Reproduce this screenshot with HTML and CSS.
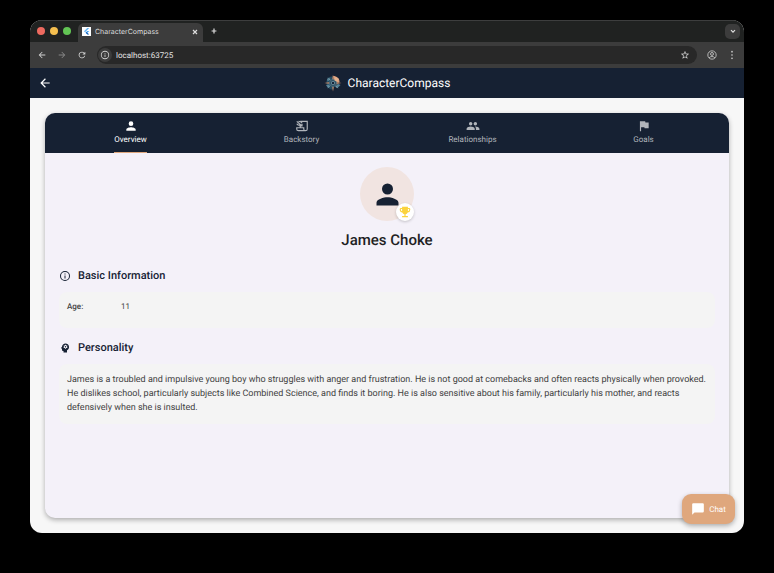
FILE: index.html
```html
<!DOCTYPE html>
<html lang="en">
<head>
<meta charset="utf-8">
<title>CharacterCompass</title>
<link rel="stylesheet" href="styles.css">
</head>
<body>
<div class="window">
  <div class="tabstrip">
    <div class="lights"><span class="light red"></span><span class="light yellow"></span><span class="light green"></span></div>
    <div class="browser-tab">
      <svg class="favicon" viewBox="0 0 18 18"><path fill="#fff" d="M0 0h18v18H0z"/><path fill="#64b5f6" d="M10.500 2h4L6 10.500l-2-2z"/><path fill="#42a5f5" d="M10.500 8h4L11 11.500l-2-2z"/><path fill="#1565c0" d="M9 9.500l5.500 5.500h-4L7 11.500z"/></svg>
      <span class="tab-title">CharacterCompass</span>
      <button class="plain" aria-label="Close tab"><svg class="i8" viewBox="0 0 10 10"><path class="line" d="M2.500 2.500l5 5M7.500 2.500l-5 5"/></svg></button>
    </div>
    <button class="plain new-tab" aria-label="New tab"><svg class="i8" viewBox="0 0 10 10"><path class="line" d="M5 2v6M2 5h6"/></svg></button>
    <button class="plain tab-search" aria-label="Search tabs"><svg class="i8" viewBox="0 0 10 10"><path class="line" d="M2.500 4L5 6.500 7.500 4"/></svg></button>
  </div>
  <div class="toolbar">
    <button class="plain" aria-label="Back"><svg class="i10" viewBox="0 0 24 24"><path fill="currentColor" d="M20 11H7.830l5.590-5.590L12 4l-8 8 8 8 1.410-1.410L7.830 13H20z"/></svg></button>
    <button class="plain dim" aria-label="Forward"><svg class="i10" viewBox="0 0 24 24"><path fill="currentColor" d="M4 13h12.170l-5.590 5.590L12 20l8-8-8-8-1.410 1.410L16.170 11H4z"/></svg></button>
    <button class="plain" aria-label="Reload"><svg class="i10" viewBox="0 0 24 24"><path fill="currentColor" d="M17.650 6.350A8 8 0 1 0 19.730 14h-2.080A6 6 0 1 1 12 6c1.660 0 3.140.69 4.220 1.780L13 11h7V4z"/></svg></button>
    <div class="address">
      <span class="site-info"><svg class="i10" viewBox="0 0 24 24"><path fill="currentColor" d="M11 7h2v2h-2zm0 4h2v6h-2zm1-9a10 10 0 1 0 0 20 10 10 0 0 0 0-20zm0 18a8 8 0 1 1 0-16 8 8 0 0 1 0 16z"/></svg></span>
      <input class="url" type="text" value="localhost:63725" aria-label="Address">
      <button class="plain" aria-label="Bookmark"><svg class="i10" viewBox="0 0 24 24"><path fill="currentColor" d="M22 9.240l-7.190-.62L12 2 9.190 8.630 2 9.240l5.460 4.730L5.820 21 12 17.270 18.180 21l-1.630-7.030zM12 15.400l-3.760 2.270 1-4.280-3.320-2.880 4.380-.38L12 6.100l1.710 4.040 4.380.38-3.320 2.880 1 4.280z"/></svg></button>
    </div>
    <button class="plain" aria-label="Profile"><svg class="i10" viewBox="0 0 24 24"><g fill="none" stroke="currentColor" stroke-width="2"><circle cx="12" cy="12" r="10"/><circle cx="12" cy="9.500" r="3.500"/><path d="M5 19c3.500-4.500 10.500-4.500 14 0"/></g></svg></button>
    <button class="plain" aria-label="Menu"><svg class="i10" viewBox="0 0 24 24"><g fill="currentColor"><circle cx="12" cy="4" r="2"/><circle cx="12" cy="12" r="2"/><circle cx="12" cy="20" r="2"/></g></svg></button>
  </div>
  <header class="appbar">
    <button class="plain back" aria-label="Go back"><svg class="i14" viewBox="0 0 24 24"><path fill="currentColor" d="M20 11H7.830l5.590-5.590L12 4l-8 8 8 8 1.410-1.410L7.830 13H20z"/></svg></button>
    <div class="brand">
      <svg class="logo" viewBox="0 0 36 36">
        <path fill="#254b60" d="M17 5C9 4 4 11 5 19s7 13 13 12V5z"/>
        <path fill="#dda17e" d="M18 4c8 0 13 5 13 12l-5 5-8-3z"/>
        <path fill="#568398" d="M6 9l7 2-6 4zM4 22l8-1-4 7zM28 20l5 2-6 6-5-3z"/>
        <path fill="#a07863" d="M18 1l2 9-2 3-2-3zM35 18l-8 2-4-2 4-2zM18 35l-2-8 2-4 2 4zM1 18l8-2 4 2-4 2z"/>
        <path fill="#7ba0ae" d="M7 7l6 3-2 2zM29 29l-6-3 2-2zM7 29l3-6 2 2z"/>
        <circle cx="18" cy="18" r="7" fill="#2b4a5e" stroke="#55798b" stroke-width="1.500"/>
        <circle cx="18" cy="18" r="3.500" fill="#17263a" stroke="#7ba0ae" stroke-width="1.500"/>
        <path fill="#e5b28f" d="M22 6l8 4-4 5-5-2z"/>
      </svg>
      <h1>CharacterCompass</h1>
    </div>
  </header>
  <main class="page">
    <section class="card">
      <nav class="tabs">
        <a href="#overview" class="tab active"><svg class="i14" viewBox="0 0 24 24"><path fill="currentColor" d="M12 12a4 4 0 1 0 0-8 4 4 0 0 0 0 8zm0 2c-2.670 0-8 1.340-8 4v2h16v-2c0-2.660-5.330-4-8-4z"/></svg><span>Overview</span></a>
        <a href="#backstory" class="tab"><svg class="i14" viewBox="0 0 24 24"><path fill="none" stroke="currentColor" stroke-width="2" d="M9 4h12v13a3 3 0 0 1-3 3H6a3 3 0 0 1-3-3v-2h12v2a3 3 0 0 0 3 3M9 15v-3"/><path fill="none" stroke="currentColor" stroke-width="2" d="M3 4l9 8M12 8v4H8M3 8c1 2 3 3 6 3M6 4c3 0 5 1 6 3"/></svg><span>Backstory</span></a>
        <a href="#relationships" class="tab"><svg class="i14" viewBox="0 0 24 24"><path fill="currentColor" d="M16 11a3 3 0 1 0 0-6 3 3 0 0 0 0 6zm-8 0a3 3 0 1 0 0-6 3 3 0 0 0 0 6zm0 2c-2.330 0-7 1.170-7 3.500V19h14v-2.500C15 14.170 10.330 13 8 13zm8 0c-.29 0-.62.02-.97.05 1.160.84 1.970 1.970 1.970 3.450V19h6v-2.500c0-2.330-4.670-3.500-7-3.500z"/></svg><span>Relationships</span></a>
        <a href="#goals" class="tab"><svg class="i14" viewBox="0 0 24 24"><path fill="currentColor" d="M14.400 6L14 4H5v17h2v-7h5.600l.4 2h7V6z"/></svg><span>Goals</span></a>
      </nav>
      <div class="content" id="overview">
        <div class="avatar">
          <svg class="person" viewBox="0 0 24 24"><path fill="currentColor" d="M12 12a4 4 0 1 0 0-8 4 4 0 0 0 0 8zm0 2c-2.670 0-8 1.340-8 4v2h16v-2c0-2.660-5.330-4-8-4z"/></svg>
          <span class="badge"><svg class="i14" viewBox="0 0 24 24"><path fill="currentColor" d="M19 5h-2V3H7v2H5a2 2 0 0 0-2 2v1c0 2.550 1.920 4.630 4.390 4.940A5 5 0 0 0 11 15.900V19H7v2h10v-2h-4v-3.100a5 5 0 0 0 3.610-2.960A5 5 0 0 0 21 8V7a2 2 0 0 0-2-2zM5 8V7h2v3.820A3 3 0 0 1 5 8zm14 0a3 3 0 0 1-2 2.820V7h2z"/></svg></span>
        </div>
        <h2 class="name">James Choke</h2>
        <h3 class="heading"><svg class="i12" viewBox="0 0 24 24"><path fill="currentColor" d="M11 7h2v2h-2zm0 4h2v6h-2zm1-9a10 10 0 1 0 0 20 10 10 0 0 0 0-20zm0 18a8 8 0 1 1 0-16 8 8 0 0 1 0 16z"/></svg>Basic Information</h3>
        <dl class="panel facts"><dt>Age:</dt><dd>11</dd></dl>
        <h3 class="heading"><svg class="i12" viewBox="0 0 24 24"><path fill="currentColor" fill-rule="evenodd" d="M13 3C9.250 3 6.200 5.940 6.020 9.640L4.100 12.200c-.25.33-.01.8.4.8H6v3a2 2 0 0 0 2 2h1v3h7v-4.680A7 7 0 0 0 13 3zm-.8 2.500h1.600l.3 1.200.9.500 1.200-.4.800 1.400-.9.800v1l.9.800-.8 1.400-1.200-.4-.9.500-.3 1.200h-1.600l-.3-1.200-.9-.5-1.200.4-.8-1.400.9-.8V9l-.9-.8.8-1.400 1.200.4.900-.5zM13 8a1.500 1.500 0 1 0 0 3 1.500 1.500 0 0 0 0-3z"/></svg>Personality</h3>
        <p class="panel bio">James is a troubled and impulsive young boy who struggles with anger and frustration. He is not good at comebacks and often reacts physically when provoked.<br>He dislikes school, particularly subjects like Combined Science, and finds it boring. He is also sensitive about his family, particularly his mother, and reacts<br>defensively when she is insulted.</p>
      </div>
    </section>
    <button class="chat"><svg class="i14" viewBox="0 0 24 24"><path fill="currentColor" d="M20 2H4a2 2 0 0 0-2 2v18l4-4h14a2 2 0 0 0 2-2V4a2 2 0 0 0-2-2z"/></svg>Chat</button>
  </main>
</div>
</body>
</html>
```
FILE: styles.css
```css
* { box-sizing: border-box; }
body {
  margin: 0;
  min-height: 100vh;
  padding: 20px 30px 40px;
  display: flex;
  background: #000;
  font-family: Roboto, "Liberation Sans", sans-serif;
  text-rendering: geometricPrecision;
}
h1, h2, h3, p, dl, dd { margin: 0; }
button, input { text-rendering: inherit; }
svg { display: block; flex: none; }
.i8 { width: 8px; height: 8px; }
.i10 { width: 10px; height: 10px; }
.i12 { width: 12px; height: 12px; }
.i14 { width: 14px; height: 14px; }
.line { fill: none; stroke: currentColor; stroke-width: 1.500; }
.plain {
  display: flex;
  align-items: center;
  justify-content: center;
  padding: 0;
  border: 0;
  background: none;
  color: inherit;
}
.window {
  flex: 1;
  display: flex;
  flex-direction: column;
  border-radius: 12px;
  overflow: hidden;
  background: #f7f7f7;
}
.tabstrip {
  height: 22px;
  display: flex;
  align-items: center;
  padding: 0 4px 0 7px;
  background: #202221;
  box-shadow: inset 0 1px #3d3e3e;
  color: #dedede;
}
.lights { display: flex; gap: 5px; }
.light { width: 8px; height: 8px; border-radius: 50%; }
.red { background: #ed6a5f; }
.yellow { background: #f5bf4f; }
.green { background: #62c554; }
.browser-tab {
  width: 125px;
  height: 19px;
  align-self: flex-end;
  display: flex;
  align-items: center;
  gap: 4px;
  margin-left: 7px;
  padding: 0 4px 2px;
  border-radius: 6px 6px 0 0;
  background: #3c3c3c;
}
.favicon { width: 9px; height: 9px; }
.tab-title { flex: 1; font: 7px Inter, sans-serif; }
.new-tab { margin-left: 7px; }
.tab-search {
  width: 15px;
  height: 15px;
  margin-left: auto;
  border-radius: 5px;
  background: #3c3c3c;
}
.toolbar {
  height: 26px;
  display: flex;
  align-items: center;
  gap: 10px;
  padding: 0 7px;
  background: #3c3c3c;
  color: #d0d0d0;
}
.dim { color: #858585; }
.address {
  flex: 1;
  height: 18px;
  display: flex;
  align-items: center;
  gap: 4px;
  padding: 0 7px 0 1px;
  border-radius: 9px;
  background: #282828;
}
.site-info {
  width: 14px;
  height: 14px;
  display: grid;
  place-items: center;
  border-radius: 50%;
  background: #3c3c3c;
}
.url {
  flex: 1;
  min-width: 0;
  padding: 0;
  border: 0;
  background: none;
  color: #e3e3e3;
  font: 8px Roboto, sans-serif;
}
.appbar {
  height: 30px;
  display: grid;
  grid-template-columns: 1fr auto 1fr;
  align-items: center;
  padding: 0 8px;
  background: #162133;
  color: #fff;
}
.back { justify-self: start; }
.brand { display: flex; align-items: center; gap: 6px; }
.logo { width: 18px; height: 18px; }
.brand h1 { font-size: 12px; font-weight: 400; }
.page {
  position: relative;
  flex: 1;
  display: flex;
  padding: 15px;
}
.card {
  flex: 1;
  border-radius: 10px;
  overflow: hidden;
  background: #f4f1f9;
  box-shadow: 0 2px 5px #0000004d;
}
.tabs { display: grid; grid-template-columns: repeat(4, 1fr); background: #162133; }
.tab {
  height: 40px;
  justify-self: center;
  display: flex;
  flex-direction: column;
  align-items: center;
  gap: 2px;
  padding-top: 6px;
  border-bottom: 1px solid transparent;
  color: #b1b5bb;
  font-size: 8px;
  line-height: 10px;
  text-decoration: none;
}
.active { border-color: #dfa77d; color: #fff; }
.content { padding: 14px; color: #162133; }
.avatar {
  position: relative;
  width: 54px;
  height: 54px;
  display: grid;
  place-items: center;
  margin: 0 auto;
  border-radius: 50%;
  background: #f1e4e1;
}
.person { width: 33px; height: 33px; }
.badge {
  position: absolute;
  right: 0;
  bottom: 0;
  padding: 2px;
  border-radius: 50%;
  background: #fff;
  box-shadow: 0 1px 3px #00000033;
  color: #fbd33d;
}
.name {
  margin: 9px 0 18px;
  color: #1f1f24;
  font-size: 15px;
  font-weight: 500;
  line-height: 20px;
  text-align: center;
}
.heading {
  display: flex;
  align-items: center;
  gap: 7px;
  font-size: 11px;
  font-weight: 500;
  line-height: 16px;
}
.panel { border-radius: 8px; background: #f4f4f4; color: #424242; }
.facts {
  display: grid;
  grid-template-columns: 54px 1fr;
  margin: 8px 0 12px;
  padding: 9px 8px 15px;
  font-size: 8px;
  line-height: 12px;
}
.facts dt { font-weight: 500; }
.bio {
  margin-top: 8px;
  padding: 9px 8px;
  font-size: 9px;
  line-height: 14px;
}
.chat {
  position: absolute;
  right: 9px;
  bottom: 9px;
  width: 53px;
  height: 30px;
  display: flex;
  align-items: center;
  justify-content: center;
  gap: 4px;
  padding: 0;
  border: 0;
  border-radius: 9px;
  background: #dfa77d;
  box-shadow: 0 2px 5px #0000004d;
  color: #fff;
  font: 8px Roboto, sans-serif;
}
```
